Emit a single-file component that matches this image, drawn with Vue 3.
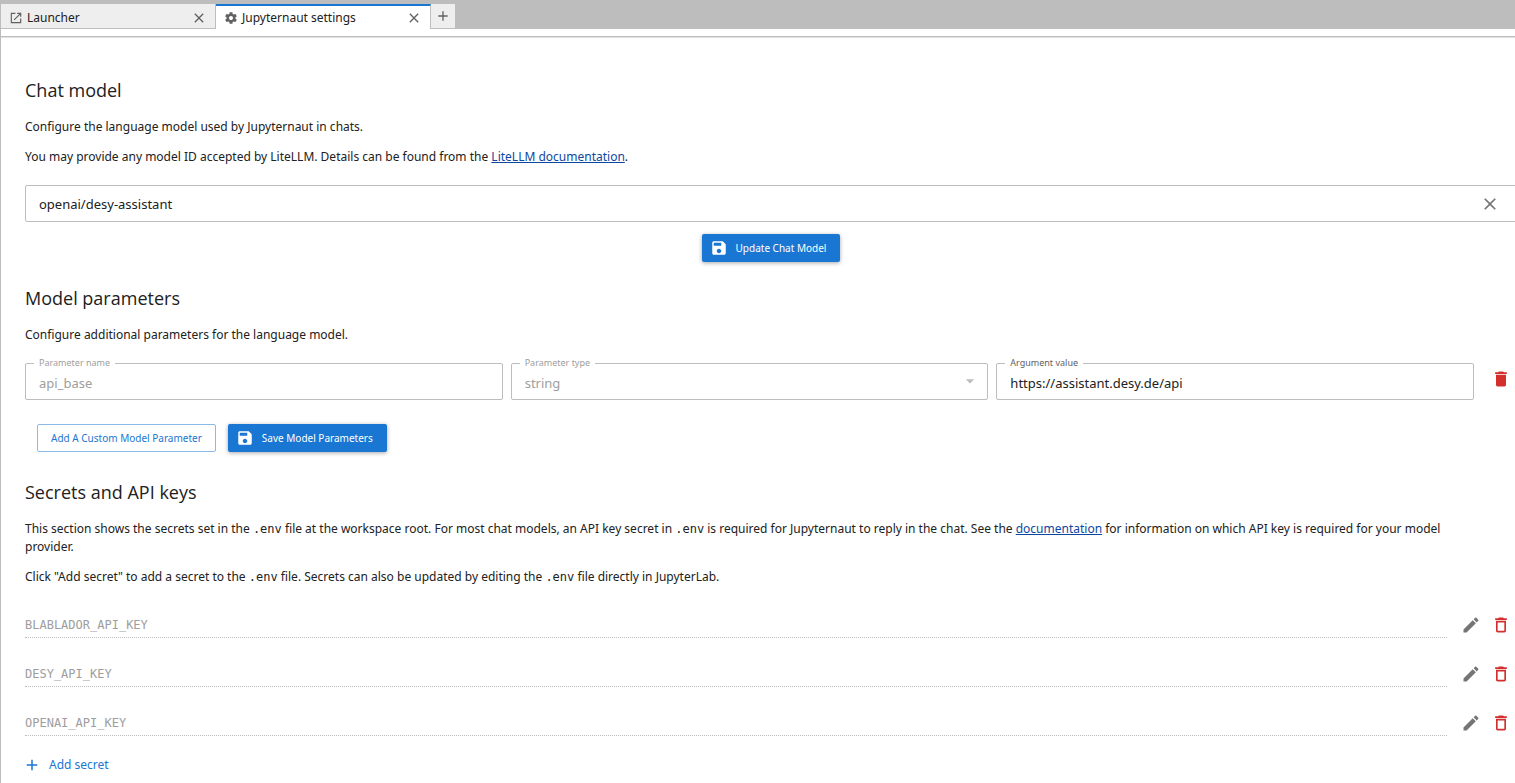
<script setup>
import { ref } from 'vue'

const chatModel = ref('openai/desy-assistant')

const parameters = ref([
  { id: 1, name: 'api_base', type: 'string', value: 'https://assistant.desy.de/api' }
])

const paramTypes = ['string', 'number', 'boolean', 'object', 'array']

const secrets = ref(['BLABLADOR_API_KEY', 'DESY_API_KEY', 'OPENAI_API_KEY'])

const addParameter = () => {
  parameters.value.push({ id: Date.now(), name: '', type: 'string', value: '' })
}

const removeParameter = (id) => {
  parameters.value = parameters.value.filter(p => p.id !== id)
}

const removeSecret = (name) => {
  secrets.value = secrets.value.filter(s => s !== name)
}
</script>

<template>
  <div class="main-area">
    <nav class="tab-bar">
      <div class="tab">
        <svg class="tab-icon" viewBox="0 0 24 24">
          <path d="M11 4H4v16h16v-7" fill="none" stroke="currentColor" stroke-width="2" />
          <path d="M14 3v2h3.6L8 14.6 9.4 16 19 6.4V10h2V3z" />
        </svg>
        <span class="tab-label">Launcher</span>
        <button class="tab-close" aria-label="Close Launcher">
          <svg viewBox="0 0 24 24"><path d="M19 6.4 17.6 5 12 10.6 6.4 5 5 6.4l5.6 5.6L5 17.6 6.4 19l5.6-5.6 5.6 5.6 1.4-1.4-5.6-5.6z" /></svg>
        </button>
      </div>
      <div class="tab active">
        <svg class="tab-icon" viewBox="0 0 24 24">
          <path d="M19.43 12.98c.04-.32.07-.64.07-.98s-.03-.66-.07-.98l2.11-1.65c.19-.15.24-.42.12-.64l-2-3.46c-.12-.22-.39-.3-.61-.22l-2.49 1c-.52-.4-1.08-.73-1.69-.98l-.38-2.65C14.46 2.18 14.25 2 14 2h-4c-.25 0-.46.18-.49.42l-.38 2.65c-.61.25-1.17.59-1.69.98l-2.49-1c-.23-.09-.49 0-.61.22l-2 3.46c-.13.22-.07.49.12.64l2.11 1.65c-.04.32-.07.65-.07.98s.03.66.07.98l-2.11 1.65c-.19.15-.24.42-.12.64l2 3.46c.12.22.39.3.61.22l2.49-1c.52.4 1.08.73 1.69.98l.38 2.65c.03.24.24.42.49.42h4c.25 0 .46-.18.49-.42l.38-2.65c.61-.25 1.17-.59 1.69-.98l2.49 1c.23.09.49 0 .61-.22l2-3.46c.12-.22.07-.49-.12-.64zM12 15.5c-1.93 0-3.5-1.57-3.5-3.5s1.57-3.5 3.5-3.5 3.5 1.57 3.5 3.5-1.57 3.5-3.5 3.5z" />
        </svg>
        <span class="tab-label">Jupyternaut settings</span>
        <button class="tab-close" aria-label="Close Jupyternaut settings">
          <svg viewBox="0 0 24 24"><path d="M19 6.4 17.6 5 12 10.6 6.4 5 5 6.4l5.6 5.6L5 17.6 6.4 19l5.6-5.6 5.6 5.6 1.4-1.4-5.6-5.6z" /></svg>
        </button>
      </div>
      <button class="tab-add" aria-label="New Launcher">
        <svg viewBox="0 0 24 24"><path d="M19 13h-6v6h-2v-6H5v-2h6V5h2v6h6z" /></svg>
      </button>
    </nav>
    <div class="toolbar"></div>

    <main class="settings">
      <section class="chat-section">
        <h2>Chat model</h2>
        <p>Configure the language model used by Jupyternaut in chats.</p>
        <p>
          You may provide any model ID accepted by LiteLLM. Details can be found from the
          <a href="#litellm">LiteLLM documentation</a>.
        </p>
        <div class="model-field">
          <input v-model="chatModel" type="text" aria-label="Chat model ID" />
          <button class="icon-btn" aria-label="Clear" @click="chatModel = ''">
            <svg viewBox="0 0 24 24"><path d="M19 6.4 17.6 5 12 10.6 6.4 5 5 6.4l5.6 5.6L5 17.6 6.4 19l5.6-5.6 5.6 5.6 1.4-1.4-5.6-5.6z" /></svg>
          </button>
        </div>
        <div class="center-row">
          <button class="btn btn-primary">
            <svg viewBox="0 0 24 24"><path d="M17 3H5c-1.11 0-2 .9-2 2v14c0 1.1.89 2 2 2h14c1.1 0 2-.9 2-2V7zm-5 16c-1.66 0-3-1.34-3-3s1.34-3 3-3 3 1.34 3 3-1.34 3-3 3zm3-10H5V5h10z" /></svg>
            Update Chat Model
          </button>
        </div>
      </section>

      <section class="params-section">
        <h2>Model parameters</h2>
        <p>Configure additional parameters for the language model.</p>
        <div v-for="param in parameters" :key="param.id" class="param-row">
          <div class="field disabled">
            <label :for="'name-' + param.id">Parameter name</label>
            <input :id="'name-' + param.id" v-model="param.name" type="text" disabled />
          </div>
          <div class="field disabled">
            <label :for="'type-' + param.id">Parameter type</label>
            <select :id="'type-' + param.id" v-model="param.type" disabled>
              <option v-for="t in paramTypes" :key="t" :value="t">{{ t }}</option>
            </select>
            <svg class="caret" viewBox="0 0 24 24"><path d="m7 10 5 5 5-5z" /></svg>
          </div>
          <div class="field">
            <label :for="'value-' + param.id">Argument value</label>
            <input :id="'value-' + param.id" v-model="param.value" type="text" />
          </div>
          <button class="icon-btn danger" aria-label="Delete parameter" @click="removeParameter(param.id)">
            <svg viewBox="0 0 24 24"><path d="M6 19c0 1.1.9 2 2 2h8c1.1 0 2-.9 2-2V7H6zM19 4h-3.5l-1-1h-5l-1 1H5v2h14z" /></svg>
          </button>
        </div>
        <div class="button-row">
          <button class="btn btn-outlined" @click="addParameter">Add A Custom Model Parameter</button>
          <button class="btn btn-primary">
            <svg viewBox="0 0 24 24"><path d="M17 3H5c-1.11 0-2 .9-2 2v14c0 1.1.89 2 2 2h14c1.1 0 2-.9 2-2V7zm-5 16c-1.66 0-3-1.34-3-3s1.34-3 3-3 3 1.34 3 3-1.34 3-3 3zm3-10H5V5h10z" /></svg>
            Save Model Parameters
          </button>
        </div>
      </section>

      <section class="secrets-section">
        <h2>Secrets and API keys</h2>
        <p>
          This section shows the secrets set in the <code>.env</code> file at the workspace root. For most chat models, an
          API key secret in <code>.env</code> is required for Jupyternaut to reply in the chat. See the
          <a href="#documentation">documentation</a> for information on which API key is required for your model provider.
        </p>
        <p>
          Click "Add secret" to add a secret to the <code>.env</code> file. Secrets can also be updated by editing the
          <code>.env</code> file directly in JupyterLab.
        </p>
        <div class="secret-list">
          <div v-for="secret in secrets" :key="secret" class="secret-row">
            <input type="text" :value="secret" :aria-label="secret" disabled />
            <button class="icon-btn" :aria-label="'Edit ' + secret">
              <svg viewBox="0 0 24 24"><path d="M3 17.25V21h3.75L17.81 9.94l-3.75-3.75zM20.71 7.04c.39-.39.39-1.02 0-1.41l-2.34-2.34c-.39-.39-1.02-.39-1.41 0l-1.83 1.83 3.75 3.75z" /></svg>
            </button>
            <button class="icon-btn danger" :aria-label="'Delete ' + secret" @click="removeSecret(secret)">
              <svg viewBox="0 0 24 24"><path d="M6 19c0 1.1.9 2 2 2h8c1.1 0 2-.9 2-2V7H6zM8 9h8v10H8zm7.5-5-1-1h-5l-1 1H5v2h14V4z" /></svg>
            </button>
          </div>
        </div>
        <button class="add-secret">
          <svg viewBox="0 0 24 24"><path d="M19 13h-6v6h-2v-6H5v-2h6V5h2v6h6z" /></svg>
          Add secret
        </button>
      </section>
    </main>
  </div>
</template>

<style>
body {
  margin: 0;
  background-color: #ffffff;
}
</style>

<style scoped>
.main-area {
  box-sizing: border-box;
  min-height: 100vh;
  border-left: 1px solid #bdbdbd;
  overflow: hidden;
  color: #212121;
  font-family: 'Segoe UI', 'Noto Sans', sans-serif;
  font-size: 12px;
  line-height: 18px;
}

button,
input,
select {
  font-family: inherit;
  font-size: inherit;
  line-height: inherit;
  color: inherit;
  margin: 0;
}

button {
  border: none;
  background: none;
  padding: 0;
  cursor: pointer;
}

svg {
  display: block;
  flex-shrink: 0;
  fill: currentColor;
}

/* Tabs */
.tab-bar {
  display: flex;
  align-items: flex-start;
  height: 25px;
  padding-top: 4px;
  background-color: #bdbdbd;
}

.tab {
  box-sizing: border-box;
  display: flex;
  align-items: center;
  width: 215px;
  height: 25px;
  padding: 3px 8px 0;
  border-right: 1px solid #bdbdbd;
  border-bottom: 1px solid #bdbdbd;
  background-color: #eeeeee;
}

.tab.active {
  padding-top: 0;
  border-top: 2px solid #1976d2;
  border-bottom: none;
  background-color: #ffffff;
}

.tab-icon {
  width: 14px;
  height: 14px;
  color: #616161;
}

.tab-label {
  flex: 1;
  margin-left: 4px;
}

.tab-close svg,
.tab-add svg {
  width: 16px;
  height: 16px;
  color: #616161;
}

.tab-add {
  width: 24px;
  height: 24px;
  padding: 0 4px;
  background-color: #eeeeee;
}

.toolbar {
  height: 7px;
  border-bottom: 1px solid #bdbdbd;
  box-shadow: 0 1px 1px rgba(0, 0, 0, 0.1);
}

/* The form is slightly wider than the panel and gets clipped on the right */
.settings {
  margin: 40px -2px 0 24px;
}

h2 {
  margin: 0 0 15px;
  font-family: 'Segoe UI', 'Open Sans', sans-serif;
  font-size: 18px;
  font-weight: 400;
  line-height: 26px;
}

p {
  margin: 0 0 12px;
  padding-right: 36px;
}

a {
  color: #0d47a1;
}

code {
  font-family: 'DejaVu Sans Mono', monospace;
  font-size: 12px;
  line-height: 1;
}

.btn {
  display: flex;
  align-items: center;
  box-sizing: border-box;
  height: 28px;
  border-radius: 2px;
  font-size: 10px;
}

.btn svg {
  width: 18px;
  height: 18px;
  margin-right: 8px;
}

.btn-primary {
  padding: 0 14px 0 8px;
  background-color: #1976d2;
  color: #ffffff;
  box-shadow: 0 1px 4px rgba(0, 0, 0, 0.35);
}

.btn-primary:hover {
  background-color: #1565c0;
}

.btn-outlined {
  padding: 0 13px;
  border: 1px solid #8cbae8;
  color: #1976d2;
}

.icon-btn {
  display: flex;
  align-items: center;
  justify-content: center;
  width: 30px;
  height: 30px;
  color: #757575;
}

.icon-btn svg {
  width: 20px;
  height: 20px;
}

.icon-btn.danger {
  color: #d32f2f;
}

/* Chat model */
.model-field {
  box-sizing: border-box;
  display: flex;
  align-items: center;
  height: 37px;
  margin-top: 19px;
  padding: 0 11px 0 13px;
  border: 1px solid #bdbdbd;
  border-radius: 2px;
}

.model-field input {
  flex: 1;
  padding: 0;
  border: none;
  outline: none;
  background: none;
  font-size: 13px;
}

.center-row {
  display: flex;
  justify-content: center;
  margin-top: 12px;
}

/* Model parameters */
.params-section {
  margin-top: 23px;
}

.param-row {
  display: flex;
  align-items: flex-start;
  gap: 8px;
  margin-top: 19px;
}

.param-row .icon-btn {
  box-sizing: border-box;
  width: 35px;
  height: 32px;
  padding-left: 3px;
}

.field {
  position: relative;
  flex: 1;
}

.field label {
  position: absolute;
  top: -8px;
  left: 9px;
  padding: 0 5px;
  background-color: #ffffff;
  color: #616161;
  font-size: 9px;
  line-height: 16px;
}

.field input,
.field select {
  box-sizing: border-box;
  display: block;
  width: 100%;
  height: 37px;
  padding: 2px 13px 0;
  border: 1px solid #bdbdbd;
  border-radius: 2px;
  outline: none;
  background: none;
  appearance: none;
  font-size: 13px;
}

.field.disabled label,
.field.disabled input,
.field.disabled select {
  color: #9e9e9e;
  opacity: 1;
}

.caret {
  position: absolute;
  top: 8px;
  right: 8px;
  width: 20px;
  height: 20px;
  color: #bdbdbd;
  pointer-events: none;
}

.button-row {
  display: flex;
  gap: 12px;
  margin: 24px 0 0 12px;
}

/* Secrets */
.secrets-section {
  margin-top: 27px;
}

.secret-list {
  margin-top: 14px;
}

.secret-row {
  display: flex;
  align-items: center;
  height: 49px;
  padding-right: 1px;
}

.secret-row input {
  box-sizing: border-box;
  flex: 1;
  height: 26px;
  margin-right: 9px;
  padding: 1px 0 0;
  border: none;
  border-bottom: 1px dotted #bdbdbd;
  background: none;
  color: #9e9e9e;
  font-family: 'DejaVu Sans Mono', monospace;
}

.add-secret {
  display: flex;
  align-items: center;
  gap: 8px;
  height: 36px;
  margin-left: -2px;
  color: #1976d2;
}

.add-secret svg {
  width: 18px;
  height: 18px;
}
</style>
